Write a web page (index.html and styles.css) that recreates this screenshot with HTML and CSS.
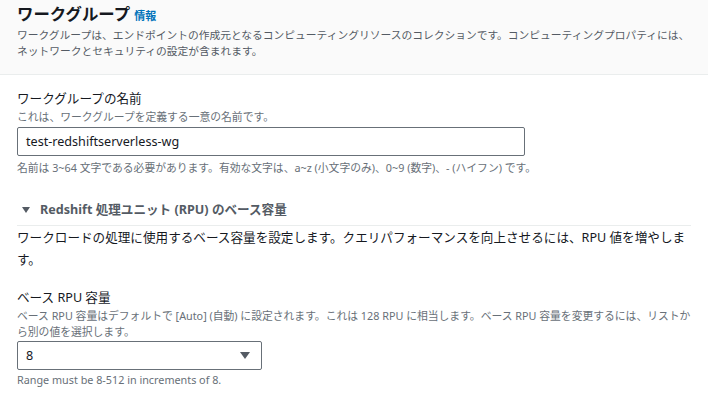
FILE: index.html
```html
<!DOCTYPE html>
<html lang="ja">
<head>
<meta charset="utf-8">
<link rel="stylesheet" href="styles.css">
</head>
<body>
<div class="header">
  <h2 class="title">ワークグループ <a class="info">情報</a></h2>
  <p class="desc">ワークグループは、エンドポイントの作成元となるコンピューティングリソースのコレクションです。コンピューティングプロパティには、ネットワークとセキュリティの設定が含まれます。</p>
</div>
<div class="body">
  <div class="field">
    <div class="label">ワークグループの名前</div>
    <div class="fdesc">これは、ワークグループを定義する一意の名前です。</div>
    <div class="input">test-redshiftserverless-wg</div>
    <div class="hint">名前は 3~64 文字である必要があります。有効な文字は、a~z (小文字のみ)、0~9 (数字)、- (ハイフン) です。</div>
  </div>
  <div class="expander">
    <div class="exp-head"><span class="caret"></span>Redshift 処理ユニット (RPU) のベース容量</div>
    <p class="exp-text">ワークロードの処理に使用するベース容量を設定します。クエリパフォーマンスを向上させるには、RPU 値を増やします。</p>
    <div class="field">
      <div class="label">ベース RPU 容量</div>
      <div class="fdesc">ベース RPU 容量はデフォルトで [Auto] (自動) に設定されます。これは 128 RPU に相当します。ベース RPU 容量を変更するには、リストから別の値を選択します。</div>
      <div class="select"><span>8</span><span class="arrow"></span></div>
      <div class="hint">Range must be 8-512 in increments of 8.</div>
    </div>
  </div>
</div>
</body>
</html>
```
FILE: styles.css
```css
* { box-sizing: border-box; }
html, body { margin: 0; padding: 0; background: #fff; }
body {
  font-family: "Noto Sans", "Noto Sans CJK JP", sans-serif;
  color: #16191f;
  width: 708px;
}
.header {
  background: #fafafa;
  border-bottom: 1px solid #eaeded;
  padding: 3px 8px 0 17px;
  height: 75px;
}
.title {
  margin: 0;
  font-size: 16.4px;
  font-weight: 700;
  line-height: 22px;
}
.info {
  font-size: 11px;
  font-weight: 700;
  color: #0073bb;
}
.desc {
  margin: 0;
  font-size: 10.75px;
  line-height: 16px;
  color: #545b64;
}
.body { padding: 14px 17px 0 17px; }
.field { display: flex; flex-direction: column; }
.label { font-size: 12.6px; line-height: 20px; }
.fdesc { font-size: 10.8px; line-height: 16px; color: #687078; }
.input {
  margin-top: 2px;
  width: 508px;
  height: 29px;
  border: 1px solid #687078;
  border-radius: 2px;
  padding: 0 8px;
  font-size: 12.6px;
  line-height: 27px;
}
.hint { font-size: 10.8px; line-height: 16px; color: #687078; margin-top: 4px; }
.field .select + .hint { margin-top: 2px; }
.expander { margin-top: 24px; }
.exp-head {
  display: flex;
  align-items: center;
  font-size: 12.6px;
  font-weight: 700;
  color: #545b64;
  line-height: 20px;
  padding: 0 0 5px 5px;
  border-bottom: 1px solid #eaeded;
}
.caret {
  width: 0; height: 0;
  border-left: 4px solid transparent;
  border-right: 4px solid transparent;
  border-top: 6px solid #545b64;
  margin-right: 10px;
}
.exp-text {
  margin: 1px 0 0;
  font-size: 12.6px;
  line-height: 22px;
}
.exp-text + .field { margin-top: 17px; }
.select {
  margin-top: 1px;
  width: 245px;
  height: 29px;
  border: 1px solid #687078;
  border-radius: 2px;
  padding: 0 8px;
  font-size: 12.6px;
  line-height: 27px;
  display: flex;
  justify-content: space-between;
  align-items: center;
}
.arrow {
  width: 0; height: 0;
  border-left: 5px solid transparent;
  border-right: 5px solid transparent;
  border-top: 7px solid #545b64;
  margin-right: 3px;
}
```
